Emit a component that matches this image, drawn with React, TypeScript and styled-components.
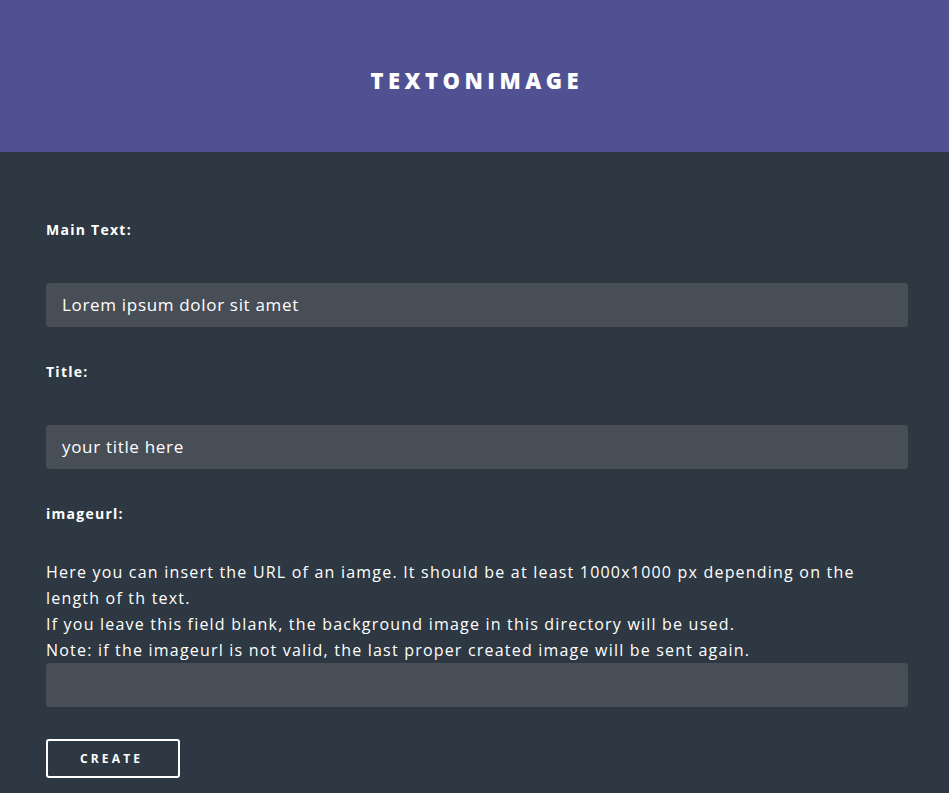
import React from "react";
import styled, { createGlobalStyle } from "styled-components";

const Global = createGlobalStyle`
  html, body { margin: 0; padding: 0; background: #2e3842; }
  body { font-family: "Open Sans", "Noto Sans", sans-serif; color: #fff; }
  * { box-sizing: border-box; }
`;

const Header = styled.header`
  height: 152px;
  background: #4f5193;
  display: flex;
  align-items: center;
  justify-content: center;
`;

const Title = styled.h1`
  margin: 0;
  font-size: 22px;
  font-weight: 800;
  letter-spacing: 0.205em;
  padding-left: 0.205em;
  line-height: 1;
  color: #fff;
  text-transform: uppercase;
  margin-top: 8px;
`;

const Form = styled.form`
  padding: 69px 41px 30px 46px;
  display: flex;
  flex-direction: column;
  align-items: flex-start;
`;

const Label = styled.label<{ $gap: number }>`
  display: block;
  font-size: 14px;
  font-weight: 700;
  line-height: 18px;
  letter-spacing: 0.09em;
  color: #fff;
  margin-bottom: ${(p) => p.$gap}px;
`;

const Input = styled.input`
  display: block;
  width: 100%;
  height: 44px;
  border: none;
  border-radius: 3px;
  background: #484e56;
  color: #fff;
  font-family: inherit;
  font-size: 17px;
  letter-spacing: 0.04em;
  padding: 0 16px 2px;
  margin-bottom: 36px;
  outline: none;
  &::placeholder { color: #fff; }
`;

const Help = styled.p`
  margin: 0;
  font-size: 16px;
  line-height: 26px;
  letter-spacing: 0.075em;
  color: #fff;
`;

const Button = styled.button`
  margin-top: -4px;
  width: 134px;
  height: 39px;
  background: transparent;
  border: 2px solid #fff;
  border-radius: 3px;
  color: #fff;
  font-family: inherit;
  font-size: 12px;
  font-weight: 700;
  letter-spacing: 0.265em;
  padding-left: 0.265em;
  padding-top: 1px;
  text-transform: uppercase;
`;

export default function App() {
  return (
    <>
      <Global />
      <Header>
        <Title>TextOnImage</Title>
      </Header>
      <Form onSubmit={(e) => e.preventDefault()}>
        <Label $gap={44}>Main Text:</Label>
        <Input defaultValue="Lorem ipsum dolor sit amet" />
        <Label $gap={44}>Title:</Label>
        <Input defaultValue="your title here" />
        <Label $gap={36}>imageurl:</Label>
        <Help>
          Here you can insert the URL of an iamge. It should be at least 1000x1000 px depending on the length of th text.
          <br />
          If you leave this field blank, the background image in this directory will be used.
          <br />
          Note: if the imageurl is not valid, the last proper created image will be sent again.
        </Help>
        <Input defaultValue="" />
        <Button type="submit">Create</Button>
      </Form>
    </>
  );
}
